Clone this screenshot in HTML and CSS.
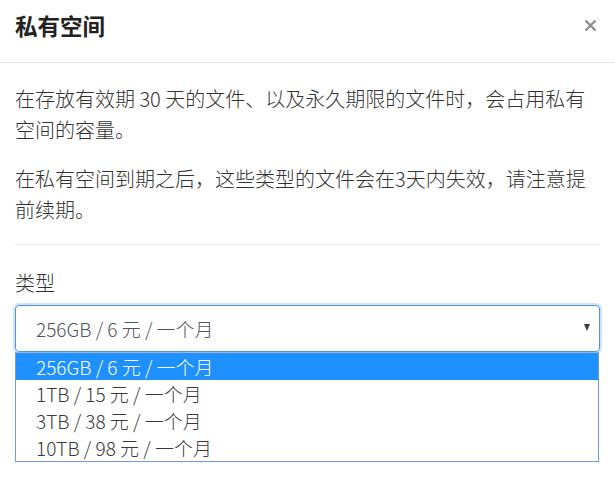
FILE: index.html
```html
<!DOCTYPE html>
<html lang="zh-CN">
<head>
<meta charset="utf-8">
<link rel="stylesheet" href="styles.css">
</head>
<body>
<div class="modal">
  <div class="modal-header">
    <h4 class="modal-title">私有空间</h4>
    <button class="close" type="button" aria-label="Close">
      <svg width="13" height="13" viewBox="0 0 13 13"><path d="M1.5 1.5L11.5 11.5M11.5 1.5L1.5 11.5" stroke="#8a8a8a" stroke-width="2.2" stroke-linecap="butt"/></svg>
    </button>
  </div>
  <div class="modal-body">
    <p class="para first">在存放有效期 30 天的文件、以及永久期限的文件时，会占用私有空间的容量。</p>
    <p class="para">在私有空间到期之后，这些类型的文件会在3天内失效，请注意提前续期。</p>
    <hr class="divider">
    <div class="label">类型</div>
    <div class="select">
      <span class="select-value">256GB / 6 元 / 一个月</span>
      <span class="caret"></span>
    </div>
    <ul class="options">
      <li class="option active">256GB / 6 元 / 一个月</li>
      <li class="option">1TB / 15 元 / 一个月</li>
      <li class="option">3TB / 38 元 / 一个月</li>
      <li class="option">10TB / 98 元 / 一个月</li>
    </ul>
  </div>
</div>
</body>
</html>
```
FILE: styles.css
```css
html, body {
  margin: 0;
  padding: 0;
  background: #fff;
}
body {
  font-family: "Noto Sans CJK SC", "Noto Sans", sans-serif;
  color: #333;
  width: 615px;
  height: 489px;
  overflow: hidden;
}
.modal-header {
  display: flex;
  align-items: flex-start;
  justify-content: space-between;
  padding: 10px 15px 22px 15px;
  height: 30px;
  border-bottom: 1px solid #e5e5e5;
}
.modal-title {
  margin: 0;
  font-size: 22.5px;
  line-height: 30px;
  font-weight: 700;
  color: #222;
}
.close {
  border: 0;
  background: transparent;
  padding: 0;
  margin: 9px 3px 0 0;
  width: 13px;
  height: 13px;
  display: flex;
}
.modal-body {
  padding: 20px 15px 0 15px;
}
.para {
  margin: 0;
  font-size: 20px;
  line-height: 31px;
  font-weight: 300;
  color: #333;
}
.para.first {
  margin-bottom: 18px;
}
.divider {
  margin: 19px 0 0 0;
  border: 0;
  border-top: 1px solid #e3e7ec;
  height: 0;
}
.label {
  margin-top: 22px;
  font-size: 20px;
  line-height: 31px;
  font-weight: 300;
  color: #333;
}
.select {
  margin-top: 7px;
  height: 45px;
  border: 1px solid #4d94e0;
  border-radius: 4px;
  box-shadow: 0 0 0 2px #d3e3f8;
  display: flex;
  align-items: center;
  justify-content: space-between;
  padding: 0 9px 0 20px;
}
.select-value {
  font-size: 19px;
  font-weight: 300;
  color: #4f5459;
}
.caret {
  width: 0;
  height: 0;
  border-left: 3.5px solid transparent;
  border-right: 3.5px solid transparent;
  border-top: 7px solid #3c3c3c;
  margin-top: -2px;
}
.options {
  list-style: none;
  margin: 0 1px 0 0;
  padding: 0;
  border: 1px solid #7399d8;
  border-top: 1px solid #9bb8e6;
}
.option {
  height: 27px;
  line-height: 27px;
  padding-left: 20px;
  font-size: 19px;
  font-weight: 300;
  color: #3a3a3a;
}
.option.active {
  background: #1e90ff;
  color: #fff;
}
```
